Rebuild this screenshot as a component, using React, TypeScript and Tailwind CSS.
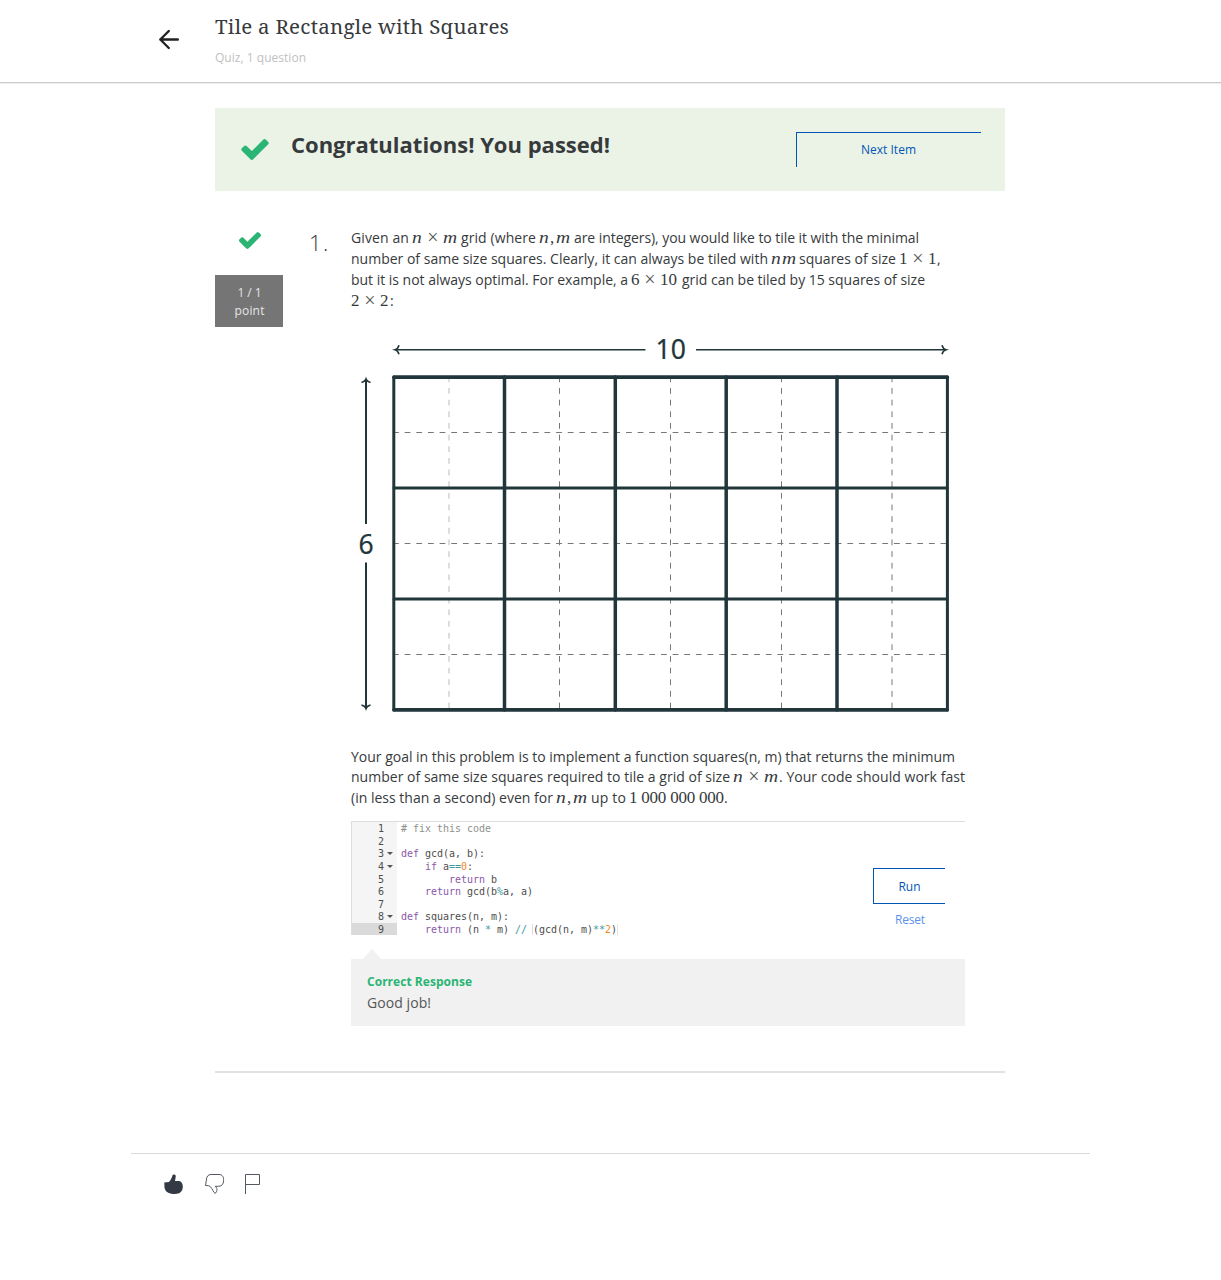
import React, { useLayoutEffect, useRef, useState } from "react";

/* A run of text whose tracking is adjusted so that it spans an exact width. */
function Fit({ w, className = "", children }: { w: number; className?: string; children: React.ReactNode }) {
  const inner = useRef<HTMLSpanElement>(null);
  const [spacing, setSpacing] = useState(0);
  useLayoutEffect(() => {
    const el = inner.current;
    if (!el) return;
    const count = (el.textContent || "").length;
    if (count > 1) setSpacing((w - el.getBoundingClientRect().width) / (count - 0.5));
  }, [w]);
  return (
    <span className={`inline-block shrink-0 whitespace-pre ${className}`} style={{ width: w, letterSpacing: spacing }}>
      <span ref={inner}>{children}</span>
    </span>
  );
}

/* Math typesetting: a formula is a row of fixed-width atoms. */
function M({ gap = "mx-[3px]", children }: { gap?: string; children: React.ReactNode }) {
  return <span className={`inline-flex shrink-0 items-baseline font-['Liberation_Serif',serif] text-[17px] ${gap}`}>{children}</span>;
}
const VarN = () => <i className="w-[11px]"><span className="inline-block origin-left scale-x-[1.15]">n</span></i>;
const VarM = () => <i className="w-[15px]"><span className="inline-block origin-left scale-x-[1.15]">m</span></i>;
const Times = () => <span className="w-5 translate-y-px text-center text-[20px] leading-[12px] text-[#555]">×</span>;
const Comma = () => <span className="w-[6px]">,</span>;
const Num = ({ children }: { children: string }) => <span className={children.length > 1 ? "w-[18px]" : "w-[9px]"}>{children}</span>;

function Row({ children, h = "h-[21px]" }: { children: React.ReactNode; h?: string }) {
  return <div className={`flex items-baseline leading-[21px] ${h}`}>{children}</div>;
}

function Check({ className }: { className: string }) {
  return (
    <svg viewBox="121 334 1550 1188" className={className} fill="#2ab574">
      <path d="M1671 566q0 40-28 68l-724 724-136 136q-28 28-68 28t-68-28l-136-136-362-362q-28-28-28-68t28-68l136-136q28-28 68-28t68 28l294 295 656-657q28-28 68-28t68 28l136 136q28 28 28 68z" />
    </svg>
  );
}

function GridFigure() {
  return (
    <svg width="614" height="390" viewBox="351 330 614 390" className="block" fill="none" stroke="#21363b">
      <g strokeWidth="1" strokeDasharray="5.8 5.85" stroke="#777">
        {[432.5, 543.5, 654.5].map((y) => <path key={y} d={`M393 ${y}H946`} />)}
        {[559.5, 670.5, 781.5, 892].map((x) => <path key={x} d={`M${x} 377V710`} strokeDashoffset="0.6" />)}
        <path d="M449 377V710" stroke="#ddd" strokeWidth="2" strokeDashoffset="0.6" />
      </g>
      <g strokeWidth="3.5" strokeLinecap="round">
        {[377.2, 488, 599, 709.8].map((y) => <path key={y} d={`M394 ${y}H947.2`} strokeWidth={y === 488 || y === 599 ? 3 : 3.7} />)}
        {[393.8, 504.5, 615.3, 726.2, 837, 947.4].map((x) => <path key={x} d={`M${x} 377V710`} strokeWidth={x === 393.8 || x === 947.4 ? 3 : 3.5} />)}
      </g>
      <g strokeWidth="1.6" strokeLinecap="butt">
        <path d="M395 349.8H645.5M696 349.8H946" />
        <path d="M366 379V524M366 562.5V709" strokeWidth="2" />
        <path d="M399 345.3Q398 349 395 349.8Q398 350.6 399 354.3M942 345.3Q943 349 946 349.8Q943 350.6 942 354.3" />
        <path d="M361.5 382.5Q365.2 381.5 366 379Q366.8 381.5 370.5 382.5M361.5 705Q365.2 706 366 708.5Q366.8 706 370.5 705" />
      </g>
      <g fill="#21363b" stroke="#21363b" strokeWidth="0.2" fontFamily="'Noto Sans', sans-serif" fontSize="26.5" textAnchor="middle">
        <text x="670.7" y="359">10</text>
        <text x="366" y="553.6">6</text>
      </g>
    </svg>
  );
}

const K = ({ children }: { children: React.ReactNode }) => <span className="text-[#8959a8]">{children}</span>;
const O = ({ children }: { children: React.ReactNode }) => <span className="text-[#3e999f]">{children}</span>;
const N = ({ children }: { children: React.ReactNode }) => <span className="text-[#f5871f]">{children}</span>;

const code: { src: React.ReactNode; w: number; fold?: boolean }[] = [
  { src: <span className="text-[#8e908c]"># fix this code</span>, w: 90 },
  { src: "", w: 0 },
  { src: <><K>def</K> gcd(a, b):</>, w: 84, fold: true },
  { src: <>    <K>if</K> a<O>==</O><N>0</N>:</>, w: 72, fold: true },
  { src: <>        <K>return</K> b</>, w: 96 },
  { src: <>    <K>return</K> gcd(b<O>%</O>a, a)</>, w: 132 },
  { src: "", w: 0 },
  { src: <><K>def</K> squares(n, m):</>, w: 108, fold: true },
  { src: <>    <K>return</K> (n <O>*</O> m) <O>//</O> <span className="shadow-[-1px_0_0_#ddd]">(</span>gcd(n, m)<O>**</O><N>2</N><span className="shadow-[1px_0_0_#e2e2e2]">)</span></>, w: 216 },
];

function Editor() {
  return (
    <div className="flex h-[114px] w-[614px] overflow-hidden border-t border-[#ddd] font-['DejaVu_Sans_Mono',monospace] text-[10px] leading-[14.6px] text-[#4d4d4c]">
      <div className="w-[46px] border-l border-[#ddd] bg-[#f5f5f5]">
        {code.map((line, i) => (
          <div key={i} className={`flex h-[12.65px] ${i === 8 ? "bg-[#dadada]" : ""}`}>
            <span className="w-8 text-right">{i + 1}</span>
            {line.fold && <svg className="ml-[3px] mt-[5px] h-[3px] w-[6px]" viewBox="0 0 6 3"><path d="M0 0H6L3 3Z" fill="#555" /></svg>}
          </div>
        ))}
      </div>
      <div className="w-[450px] pl-1">
        {code.map((line, i) => (
          <div key={i} className="h-[12.65px] whitespace-pre"><Fit w={line.w}>{line.src}</Fit></div>
        ))}
      </div>
    </div>
  );
}

export default function App() {
  return (
    <div className="min-h-[1280px] w-[1221px] bg-white font-['Open_Sans',sans-serif] text-sm text-[#373a3c]">
      <header className="flex h-[83px] border-b border-[#cacaca] shadow-[0_1px_1px_#eee]">
        <svg className="ml-[158px] mt-[29px] h-[21px] w-[21px]" viewBox="0 0 21 21" fill="none" stroke="#222" strokeWidth="2.4" strokeLinecap="round" strokeLinejoin="round">
          <path d="M10.8 2L2.3 10.5L10.8 19M2.3 10.5H19.8" />
        </svg>
        <div className="ml-[36px] pt-[11px]">
          <h1 className="h-[30px] font-['Noto_Serif','Liberation_Serif',serif] text-[20.5px] leading-[30px]"><Fit w={294}>Tile a Rectangle with Squares</Fit></h1>
          <p className="mt-[8px] text-xs leading-[18px] text-[#c1c1c1]"><Fit w={91}>Quiz, 1 question</Fit></p>
        </div>
      </header>

      <main className="ml-[215px] mt-[25px] w-[790px]">
        <section className="flex h-[83px] bg-[#ebf3e7]">
          <Check className="ml-[26px] mt-[31px] h-[21px] w-7" />
          <h2 className="ml-[22px] mt-[21px] text-[22px] font-bold leading-[30px]"><Fit w={319}>Congratulations! You passed!</Fit></h2>
          <button className="ml-auto mr-6 mt-6 h-[35px] w-[185px] border-l border-t border-[#0156b5] pr-px text-xs text-[#0156b5]"><Fit w={55}>Next Item</Fit></button>
        </section>

        <section className="mt-[37px] flex h-[845px] border-b-2 border-[#e1e1e1]">
          <div className="w-[68px]">
            <Check className="ml-[23px] mt-1 h-[17px] w-6" />
            <div className="mt-[26px] h-[52px] bg-[#757575] pl-px pt-[9px] text-center text-xs leading-[18px] text-[#e6e6e6]">
              <div><Fit w={24}>1 / 1</Fit></div>
              <div><Fit w={30}>point</Fit></div>
            </div>
          </div>
          <div className="-mt-px ml-[26px] w-[42px] text-[22px] font-light leading-[30px]"><Fit w={20}>1.</Fit></div>

          <div className="w-[614px]">
            <div className="-mt-px h-[85px]">
              <Row><Fit w={58}>Given an</Fit><M><VarN /><Times /><VarM /></M><Fit w={75}>grid (where</Fit><M><VarN /><Comma /><VarM /></M><Fit w={345}>are integers), you would like to tile it with the minimal</Fit></Row>
              <Row><Fit w={417}>number of same size squares. Clearly, it can always be tiled with</Fit><M gap="ml-[3px] mr-[2px]"><VarN /><VarM /></M><Fit w={97}>squares of size</Fit><M gap="ml-[3px]"><Num>1</Num><Times /><Num>1</Num></M>,</Row>
              <Row><Fit w={277}>but it is not always optimal. For example, a</Fit><M gap="ml-[3px] mr-[4px]"><Num>6</Num><Times /><Num>10</Num></M><Fit w={243}>grid can be tiled by 15 squares of size</Fit></Row>
              <Row><M gap="mr-px"><Num>2</Num><Times /><Num>2</Num></M>:</Row>
            </div>
            <div className="mt-[18px]"><GridFigure /></div>
            <div className="mt-[26px] h-[63px]">
              <Row h="h-[20px]"><Fit w={604}>Your goal in this problem is to implement a function squares(n, m) that returns the minimum</Fit></Row>
              <Row><Fit w={379}>number of same size squares required to tile a grid of size</Fit><M gap="ml-[3px]"><VarN /><Times /><VarM /></M><Fit w={186}>. Your code should work fast</Fit></Row>
              <Row><Fit w={202}>(in less than a second) even for</Fit><M><VarN /><Comma /><VarM /></M><Fit w={35}>up to</Fit><M gap="ml-[3px]"><Fit w={95}>1 000 000 000</Fit></M>.</Row>
            </div>
            <div className="relative mt-[12px]">
              <Editor />
              <div className="absolute left-[522px] top-[47px] w-[72px] text-center text-xs text-[#0156b5]">
                <button className="block h-[36px] w-[72px] border-y border-l border-[#0156b5] pt-0.5"><Fit w={22}>Run</Fit></button>
                <button className="ml-[2px] mt-[7px] leading-[18px] text-[#5c91ed]"><Fit w={30}>Reset</Fit></button>
              </div>
            </div>
            <svg className="ml-3 mt-[14px] block h-[10px] w-[18px]" viewBox="0 0 18 10"><path d="M9 0L18 10H0Z" fill="#f1f1f1" /></svg>
            <div className="h-[67px] bg-[#f1f1f1] px-4 pt-[13px]">
              <div className="text-xs font-bold leading-[20px] text-[#2ab574]"><Fit w={105}>Correct Response</Fit></div>
              <div className="leading-[22px] text-[#555]"><Fit w={64}>Good job!</Fit></div>
            </div>
          </div>
        </section>
      </main>

      <footer className="ml-[131px] mt-20 flex w-[959px] border-t border-[#d9d9d9] pt-5 text-[#373a3c]">
        <svg className="ml-[33px] h-5 w-5" viewBox="0 0 20 20" fill="#343a44"><path d="M.3 8.5L5 8C7 6 8 3.5 8.6 1.1C8.9 0 11.9 0 11.8 2.2L11 7H14C17 7 18.8 9 18.8 12.6C18.8 17.7 16 20 10.8 20C4.4 20 1.1 17.7.5 13.5Z" /></svg>
        <svg className="ml-[21px] h-5 w-5" viewBox="0 0 20 20" fill="none" stroke="#535861"><path d="M.5 11.5L1.4 6Q1.6 .6 6 .5H14C17.3.5 19 3 18.5 6.8C18.6 10 17 12 13.8 12.3H10.2C12.5 14.6 12.4 16 11 18.7Q10 20 9 18.4C7.4 16 6.4 12.5 3.7 11.7Z" /></svg>
        <svg className="ml-[20px] h-5 w-4" viewBox="0 0 16 20" fill="none" stroke="#535861"><path d="M.5 20V.5H14.5V10.5H.5" /></svg>
      </footer>
    </div>
  );
}
